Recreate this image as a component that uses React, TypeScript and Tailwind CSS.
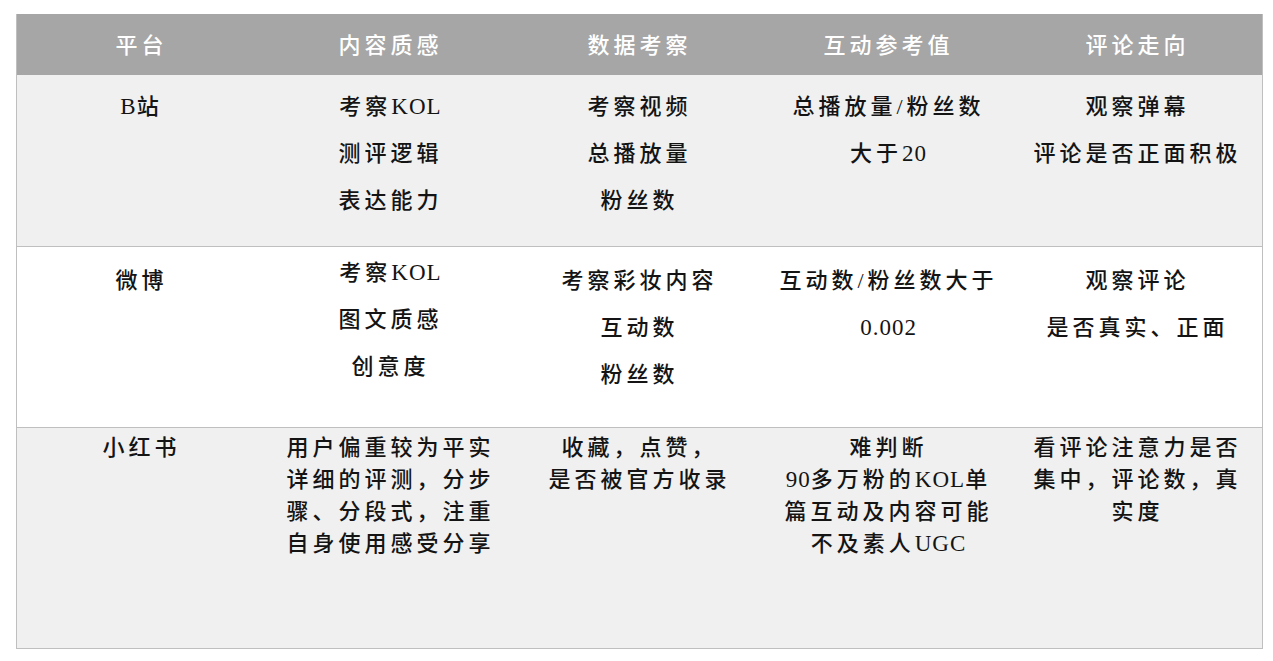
const font = {
  fontFamily: '"Liberation Serif", "Noto Sans CJK SC", serif',
};

type Cell = { lines: string[]; pad?: string };

const headers = ["平台", "内容质感", "数据考察", "互动参考值", "评论走向"];

const rows: { bg: string; height: string; leading: string; pad: string; cells: Cell[] }[] = [
  {
    bg: "bg-[#f0f0f0]",
    height: "h-[172px]",
    leading: "leading-[47px]",
    pad: "pt-[8px]",
    cells: [
      { lines: ["B站"] },
      { lines: ["考察KOL", "测评逻辑", "表达能力"] },
      { lines: ["考察视频", "总播放量", "粉丝数"] },
      { lines: ["总播放量/粉丝数", "大于20"] },
      { lines: ["观察弹幕", "评论是否正面积极"] },
    ],
  },
  {
    bg: "bg-white",
    height: "h-[181px]",
    leading: "leading-[47px]",
    pad: "pt-[10px]",
    cells: [
      { lines: ["微博"] },
      { lines: ["考察KOL", "图文质感", "创意度"], pad: "pt-[2px]" },
      { lines: ["考察彩妆内容", "互动数", "粉丝数"] },
      { lines: ["互动数/粉丝数大于", "0.002"] },
      { lines: ["观察评论", "是否真实、正面"] },
    ],
  },
  {
    bg: "bg-[#f0f0f0]",
    height: "h-[220px]",
    leading: "leading-[32px]",
    pad: "pt-[4px]",
    cells: [
      { lines: ["小红书"] },
      { lines: ["用户偏重较为平实", "详细的评测，分步", "骤、分段式，注重", "自身使用感受分享"] },
      { lines: ["收藏，点赞，", "是否被官方收录"] },
      { lines: ["难判断", "90多万粉的KOL单", "篇互动及内容可能", "不及素人UGC"] },
      { lines: ["看评论注意力是否", "集中，评论数，真", "实度"] },
    ],
  },
];

// latin runs get tighter spacing than the CJK ones
function Line({ text }: { text: string }) {
  const parts = text.split(/([A-Za-z0-9.]+)/).filter(Boolean);
  return (
    <div className="whitespace-nowrap">
      {parts.map((p, i) =>
        /^[A-Za-z0-9.]+$/.test(p) ? (
          <span key={i} className="tracking-[1px] text-[23px]">
            {p}
          </span>
        ) : (
          <span key={i}>{p}</span>
        )
      )}
    </div>
  );
}

export default function App() {
  return (
    <div className="min-h-[661px] w-[1273px] bg-white pt-[14px] pl-[16px]" style={font}>
      <div className="w-[1247px] border-x border-b border-[#bfbfbf]">
        <div className="grid h-[61px] grid-cols-5 bg-[#a6a6a6]">
          {headers.map((h) => (
            <div
              key={h}
              className="flex items-center justify-center pt-[2px] text-[22px] font-medium tracking-[4px] text-white"
            >
              {h}
            </div>
          ))}
        </div>
        {rows.map((row, i) => (
          <div
            key={i}
            className={`grid grid-cols-5 ${row.bg} ${row.height} ${
              i < rows.length - 1 ? "border-b border-[#bfbfbf]" : ""
            }`}
          >
            {row.cells.map((cell, j) => (
              <div
                key={j}
                className={`flex flex-col items-center text-[22px] font-medium tracking-[4px] text-[#141414] ${row.leading} ${
                  cell.pad ?? row.pad
                }`}
              >
                {cell.lines.map((line) => (
                  <Line key={line} text={line} />
                ))}
              </div>
            ))}
          </div>
        ))}
      </div>
    </div>
  );
}
